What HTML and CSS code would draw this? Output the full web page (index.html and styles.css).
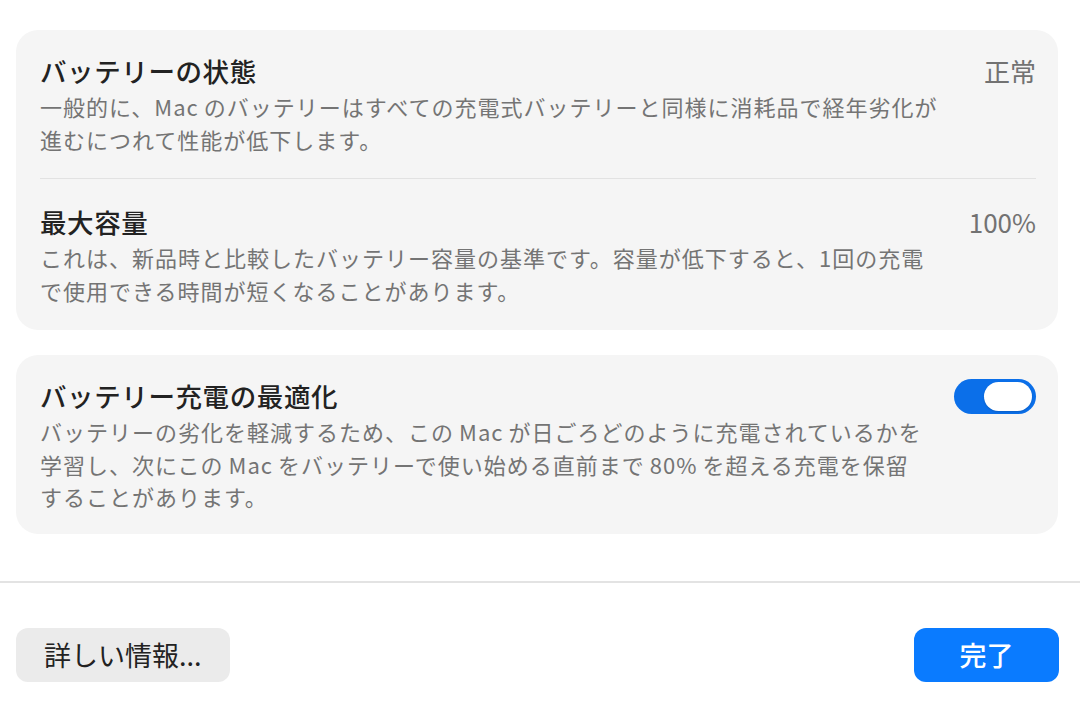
FILE: index.html
```html
<!DOCTYPE html>
<html lang="ja">
<head>
  <meta charset="UTF-8">
  <meta name="viewport" content="width=device-width, initial-scale=1.0">
  <title>バッテリー</title>
  <link rel="stylesheet" href="styles.css">
</head>
<body>
  <div class="sheet">
    <div class="card">
      <div class="row">
        <div class="row-text">
          <div class="row-title">バッテリーの状態</div>
          <div class="row-desc">一般的に、<span class="latin tight">Mac</span>のバッテリーはすべての充電式バッテリーと同様に消耗品で経年劣化が<br>進むにつれて性能が低下します。</div>
        </div>
        <div class="row-value">正常</div>
      </div>
      <div class="row">
        <div class="row-text">
          <div class="row-title">最大容量</div>
          <div class="row-desc">これは、新品時と比較したバッテリー容量の基準です。容量が低下すると、1回の充電<br>で使用できる時間が短くなることがあります。</div>
        </div>
        <div class="row-value">100%</div>
      </div>
    </div>

    <div class="card">
      <div class="row">
        <div class="row-text">
          <div class="row-title">バッテリー充電の最適化</div>
          <div class="row-desc">バッテリーの劣化を軽減するため、この<span class="latin">Mac</span>が日ごろどのように充電されているかを<br>学習し、次にこの<span class="latin">Mac</span>をバッテリーで使い始める直前まで<span class="latin">80%</span>を超える充電を保留<br>することがあります。</div>
        </div>
        <div class="toggle on"><span class="knob"></span></div>
      </div>
    </div>
  </div>

  <div class="footer">
    <button class="btn">詳しい情報...</button>
    <button class="btn primary">完了</button>
  </div>
</body>
</html>
```

FILE: styles.css
```css
* {
  box-sizing: border-box;
}

body {
  margin: 0;
  background: #ffffff;
  font-family: "Noto Sans CJK JP", "Noto Sans", sans-serif;
  color: #242424;
}

.sheet {
  display: flex;
  flex-direction: column;
  gap: 25px;
  padding: 30px 22px 0 16px;
}

.card {
  background: #f5f5f5;
  border-radius: 22px;
  padding: 0 22px 0 24px;
}

.row {
  display: flex;
  justify-content: space-between;
  align-items: flex-start;
  gap: 20px;
  padding: 24px 0 23px;
}

.row + .row {
  border-top: 1px solid #e2e2e2;
  padding-top: 26px;
  padding-bottom: 24px;
}

.row:only-child {
  padding: 24px 0 21px;
}

.row-title {
  font-size: 26.5px;
  font-weight: 500;
  line-height: 34px;
  letter-spacing: 0.6px;
  color: #222222;
}

.row-desc {
  margin-top: 2px;
  font-size: 22px;
  line-height: 32.5px;
  color: #747474;
  letter-spacing: 1px;
}

.latin {
  margin: 0 5px;
}

.latin.tight {
  margin-left: 0;
}

.row-value {
  font-size: 26px;
  line-height: 34px;
  color: #727272;
  white-space: nowrap;
}

.toggle {
  flex: none;
  width: 82px;
  height: 35px;
  border-radius: 18px;
  background: #0b6fe9;
  padding: 3px 4px;
  display: flex;
  justify-content: flex-end;
}

.knob {
  width: 48px;
  height: 29px;
  border-radius: 15px;
  background: #ffffff;
  box-shadow: 0 1px 2px rgba(0, 0, 0, 0.15);
}

.footer {
  margin-top: 47px;
  border-top: 2px solid #e3e3e3;
  display: flex;
  justify-content: space-between;
  padding: 45px 21px 0 16px;
}

.btn {
  height: 54px;
  border: none;
  border-radius: 12px;
  padding: 0 28px;
  font-family: "Noto Sans CJK JP", "Noto Sans", sans-serif;
  font-size: 27px;
  color: #222222;
  background: #ebebeb;
}

.btn.primary {
  width: 145px;
  background: #0a7bff;
  color: #ffffff;
  font-weight: 500;
}
```
